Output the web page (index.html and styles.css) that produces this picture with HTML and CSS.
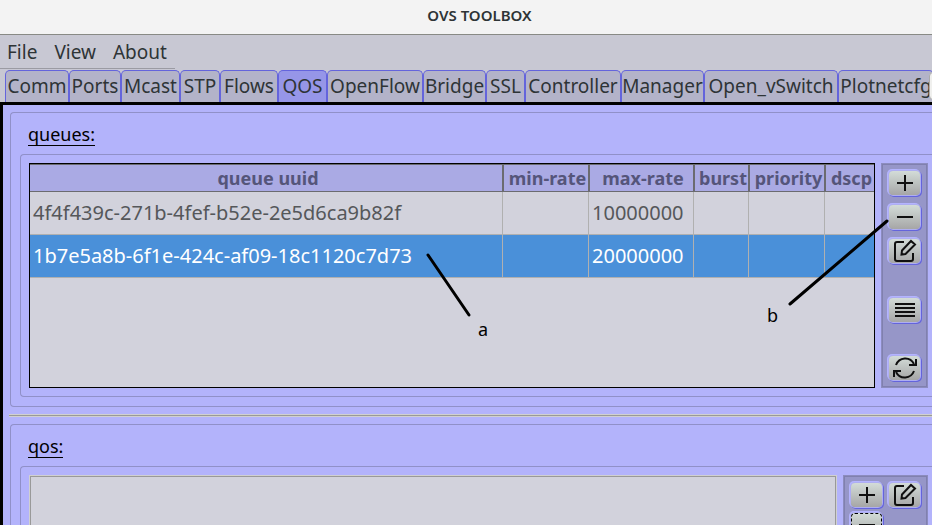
FILE: index.html
```html
<!DOCTYPE html>
<html lang="en">
<head>
<meta charset="utf-8">
<title>OVS TOOLBOX</title>
<link rel="stylesheet" href="styles.css">
</head>
<body>
<svg class="symbols" aria-hidden="true">
  <symbol id="plus" viewBox="0 0 24 24"><path d="M12 4v16M4 12h16"/></symbol>
  <symbol id="minus" viewBox="0 0 24 24"><path d="M4 12h16"/></symbol>
  <symbol id="edit" viewBox="0 0 24 24"><path d="M11 3H4Q2 3 2 5V20Q2 22 4 22H18Q20 22 20 20V14M8.500 15.500L9 11.500L18 2L22 5.500L12.500 15Z"/></symbol>
  <symbol id="list" viewBox="0 0 24 24"><path d="M2 6h20M2 10h20M2 14h20M2 18h20"/></symbol>
  <symbol id="refresh" viewBox="0 0 24 24"><path d="M3 9C6 1 17 0 21 8M23 3V9H16M21 15C18 23 7 24 3 16M1 21V15H8"/></symbol>
</svg>
<div class="window">
  <header class="titlebar"><h1>OVS TOOLBOX</h1></header>
  <nav class="menubar">
    <div class="menus">
      <button type="button">File</button>
      <button type="button">View</button>
      <button type="button">About</button>
    </div>
  </nav>
  <div class="tabs" role="tablist">
    <button type="button" role="tab">Comm</button>
    <button type="button" role="tab">Ports</button>
    <button type="button" role="tab">Mcast</button>
    <button type="button" role="tab">STP</button>
    <button type="button" role="tab">Flows</button>
    <button type="button" role="tab" aria-selected="true">QOS</button>
    <button type="button" role="tab">OpenFlow</button>
    <button type="button" role="tab">Bridge</button>
    <button type="button" role="tab">SSL</button>
    <button type="button" role="tab">Controller</button>
    <button type="button" role="tab">Manager</button>
    <button type="button" role="tab">Open_vSwitch</button>
    <button type="button" role="tab">Plotnetcfg</button>
    <button type="button" class="tab-scroll" aria-label="More tabs"></button>
  </div>
  <main class="panel">
    <section class="group">
      <h2>queues:</h2>
      <div class="frame">
        <div class="pane focused">
          <table>
            <colgroup><col><col class="c-min"><col class="c-max"><col class="c-burst"><col class="c-priority"><col class="c-dscp"></colgroup>
            <thead><tr><th>queue uuid</th><th>min-rate</th><th>max-rate</th><th>burst</th><th>priority</th><th>dscp</th></tr></thead>
            <tbody>
              <tr><td>4f4f439c-271b-4fef-b52e-2e5d6ca9b82f</td><td></td><td>10000000</td><td></td><td></td><td></td></tr>
              <tr class="selected"><td>1b7e5a8b-6f1e-424c-af09-18c1120c7d73</td><td></td><td>20000000</td><td></td><td></td><td></td></tr>
            </tbody>
          </table>
        </div>
        <div class="tools">
          <div class="stack">
            <button type="button" aria-label="Add queue"><svg><use href="#plus"/></svg></button>
            <button type="button" aria-label="Remove queue"><svg><use href="#minus"/></svg></button>
            <button type="button" aria-label="Edit queue"><svg><use href="#edit"/></svg></button>
          </div>
          <button type="button" aria-label="List queues"><svg><use href="#list"/></svg></button>
          <button type="button" aria-label="Refresh queues"><svg><use href="#refresh"/></svg></button>
        </div>
      </div>
      <svg class="callouts" width="922" height="294" viewBox="10 112 922 294">
        <path d="M428 255L469 315M887 221L790 304"/>
        <text x="478" y="336">a</text>
        <text x="767" y="322">b</text>
      </svg>
    </section>
    <hr>
    <section class="group">
      <h2>qos:</h2>
      <div class="frame">
        <div class="pane"></div>
        <div class="tools pair">
          <button type="button" aria-label="Add qos"><svg><use href="#plus"/></svg></button>
          <button type="button" aria-label="Edit qos"><svg><use href="#edit"/></svg></button>
          <button type="button" class="focus" aria-label="Remove qos"><svg><use href="#minus"/></svg></button>
        </div>
      </div>
    </section>
  </main>
</div>
</body>
</html>
```

FILE: styles.css
```css
* { box-sizing: border-box; }

body {
  margin: 0;
  overflow: hidden;
  background: #c8c8d3;
  color: #2e3436;
  font: 18px/24px "Noto Sans", sans-serif;
}

button {
  margin: 0;
  padding: 0;
  border: 0;
  background: none;
  color: inherit;
  font: inherit;
}

.symbols { position: absolute; width: 0; height: 0; }

.window {
  display: flex;
  flex-direction: column;
  height: 100vh;
  overflow: hidden;
}

.titlebar {
  flex: none;
  padding: 3px 0 7px 27px;
  border-bottom: 1px solid #888a85;
  background: #f3f3f3;
  text-align: center;
}

.titlebar h1 {
  margin: 0;
  font-size: 15px;
  line-height: 24px;
  font-weight: 600;
}

.menubar { flex: none; display: flex; }

.menus {
  display: flex;
  gap: 17px;
  padding: 5px 8px 4px 7px;
  border-bottom: 1px solid #9b9ba3;
  font-size: 19px;
}

.tabs {
  flex: none;
  position: relative;
  display: grid;
  grid-template-columns: 64px 52px 59px 40px 58px 49px 96px 63px 39px 96px 83px 134px 96px;
  margin-top: 1px;
  padding-left: 5px;
  height: 32px;
  overflow: hidden;
  font-size: 19px;
}

.tabs [role="tab"] {
  padding-bottom: 2px;
  border: 1px solid #6464dc;
  border-bottom: 0;
  border-radius: 5px 5px 0 0;
  background: #b3b3c9;
  white-space: nowrap;
}

.tabs [aria-selected="true"] { background: #9696e8; }

.tabs .tab-scroll {
  position: absolute;
  right: -21px;
  top: 2px;
  width: 24px;
  height: 28px;
  border: 1px solid #aaa;
  border-radius: 4px;
  background: #f0f0ee;
}

.panel {
  flex: 1;
  min-height: 0;
  overflow: hidden;
  padding: 7px 0 0 7px;
  border: solid #000;
  border-width: 3px 0 0 3px;
  background: #b3b3fb;
}

.group {
  position: relative;
  padding: 10px 0 9px 9px;
  border: 1px solid #9090c8;
  border-right: 0;
  border-radius: 4px 0 0 4px;
}

.group h2 {
  width: fit-content;
  margin: 0 0 8px 8px;
  border-bottom: 1px solid #000;
  color: #000;
  font-size: 18px;
  line-height: 22px;
  font-weight: 400;
}

.frame {
  display: flex;
  gap: 6px;
  padding: 8px 4px 8px 8px;
  border: 1px solid #9090c8;
  border-right: 0;
  border-radius: 4px 0 0 4px;
}

.pane {
  flex: 1;
  min-width: 0;
  min-height: 225px;
  border: 1px solid #d0d0d0;
  outline: 1px solid #999;
  outline-offset: -2px;
  background: #d2d2dc;
}

.pane.focused { border-color: #000; outline: 0; }

table {
  width: 100%;
  table-layout: fixed;
  border-collapse: separate;
  border-spacing: 0;
}

.c-min { width: 86px; }
.c-max { width: 105px; }
.c-burst { width: 55px; }
.c-priority { width: 76px; }
.c-dscp { width: 49px; }

th {
  height: 28px;
  padding: 0 0 0 4px;
  border: solid #6b6b70;
  border-width: 1px 1px 1px 0;
  background: #aaaae4;
  color: #55557a;
  line-height: 24px;
  white-space: nowrap;
}

th + th { box-shadow: inset 1px 0 #6b6b70; }

td {
  height: 43px;
  padding: 0 3px;
  border: solid #b0b0b0;
  border-width: 0 1px 1px 0;
  color: #55575a;
  font-size: 20px;
  white-space: nowrap;
}

th:last-child, td:last-child { border-right: 0; }

.selected td { background: #4a90d9; color: #fff; }

.tools {
  flex: none;
  display: flex;
  flex-direction: column;
  justify-content: space-between;
  padding: 5px;
  border: 1px solid #8c8cbe;
  outline: 1px solid #8080ae;
  outline-offset: -2px;
  background: #9696c8;
}

.stack { display: grid; gap: 6px; }

.tools.pair {
  display: grid;
  grid-template-columns: auto auto;
  align-content: start;
  gap: 2px 3px;
}

.tools button {
  display: grid;
  place-items: center;
  width: 31px;
  height: 24px;
  margin: 2px;
  border-radius: 4px;
  background: linear-gradient(#d3dcd8, #a6a6a6);
  box-shadow: 0 0 0 1px #aeaef2, -1px -1px 0 1px #b4b4ff, 1px 1px 0 1px #6464dc;
}

.tools button.focus {
  outline: 1px dashed #000;
  outline-offset: -1px;
}

.tools svg {
  width: 24px;
  height: 24px;
  fill: none;
  stroke: #101010;
  stroke-width: 2;
}

.callouts {
  position: absolute;
  left: -1px;
  top: -1px;
  pointer-events: none;
}

.callouts path {
  fill: none;
  stroke: #000;
  stroke-width: 3;
  stroke-linecap: round;
}

hr {
  height: 3px;
  margin: 7px 0 7px -1px;
  border: solid #d0d0d0;
  border-width: 1px 0;
  background: #999;
}
```
